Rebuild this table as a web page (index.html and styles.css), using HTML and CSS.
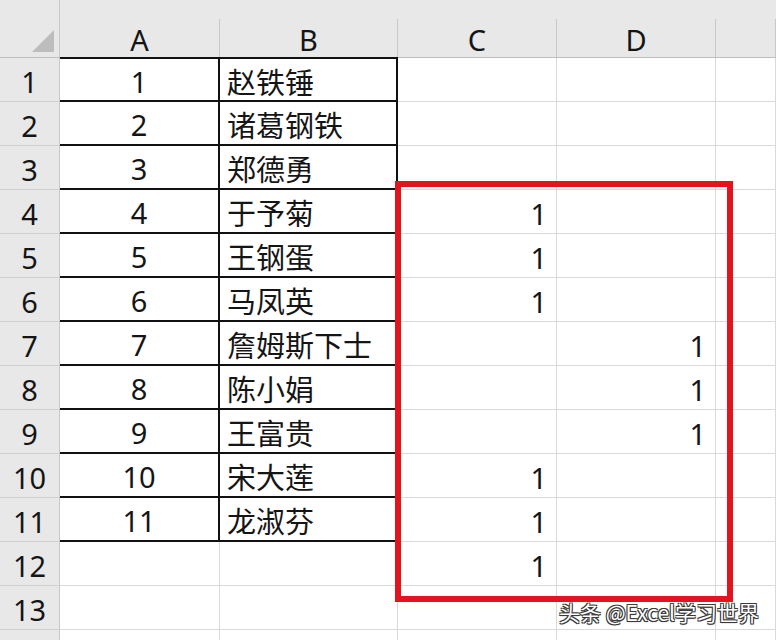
FILE: index.html
```html
<!DOCTYPE html>
<html lang="zh">
<head>
<meta charset="utf-8">
<link rel="stylesheet" href="styles.css">
</head>
<body>
<div class="sheet">
  <div class="grid">
    <div class="hd corner"><svg class="tri" width="22" height="22" viewBox="0 0 22 22"><polygon points="22,0 22,22 0,22" fill="#bdbdbd"/></svg></div>
    <div class="hd col"><span>A</span></div>
    <div class="hd col"><span>B</span></div>
    <div class="hd col"><span>C</span></div>
    <div class="hd col"><span>D</span></div>
    <div class="hd col"><span></span></div>

    <div class="rh">1</div><div class="c ctr bx top">1</div><div class="c txt bx top">赵铁锤</div><div class="c num"></div><div class="c num"></div><div class="c"></div>
    <div class="rh">2</div><div class="c ctr bx">2</div><div class="c txt bx">诸葛钢铁</div><div class="c num"></div><div class="c num"></div><div class="c"></div>
    <div class="rh">3</div><div class="c ctr bx">3</div><div class="c txt bx">郑德勇</div><div class="c num"></div><div class="c num"></div><div class="c"></div>
    <div class="rh">4</div><div class="c ctr bx">4</div><div class="c txt bx">于予菊</div><div class="c num">1</div><div class="c num"></div><div class="c"></div>
    <div class="rh">5</div><div class="c ctr bx">5</div><div class="c txt bx">王钢蛋</div><div class="c num">1</div><div class="c num"></div><div class="c"></div>
    <div class="rh">6</div><div class="c ctr bx">6</div><div class="c txt bx">马凤英</div><div class="c num">1</div><div class="c num"></div><div class="c"></div>
    <div class="rh">7</div><div class="c ctr bx">7</div><div class="c txt bx">詹姆斯下士</div><div class="c num"></div><div class="c num">1</div><div class="c"></div>
    <div class="rh">8</div><div class="c ctr bx">8</div><div class="c txt bx">陈小娟</div><div class="c num"></div><div class="c num">1</div><div class="c"></div>
    <div class="rh">9</div><div class="c ctr bx">9</div><div class="c txt bx">王富贵</div><div class="c num"></div><div class="c num">1</div><div class="c"></div>
    <div class="rh">10</div><div class="c ctr bx">10</div><div class="c txt bx">宋大莲</div><div class="c num">1</div><div class="c num"></div><div class="c"></div>
    <div class="rh">11</div><div class="c ctr bx">11</div><div class="c txt bx">龙淑芬</div><div class="c num">1</div><div class="c num"></div><div class="c"></div>
    <div class="rh">12</div><div class="c ctr"></div><div class="c txt"></div><div class="c num">1</div><div class="c num"></div><div class="c"></div>
    <div class="rh">13</div><div class="c"></div><div class="c"></div><div class="c"></div><div class="c"></div><div class="c"></div>
    <div class="rh"></div><div class="c"></div><div class="c"></div><div class="c"></div><div class="c"></div><div class="c"></div>
  </div>
  <div class="redbox"></div>
  <div class="mark">头条 @Excel学习世界</div>
</div>
</body>
</html>
```

FILE: styles.css
```css
html, body {
  margin: 0;
  padding: 0;
  background: #ffffff;
}

.sheet {
  position: relative;
  width: 776px;
  height: 640px;
  overflow: hidden;
  background: #ffffff;
  font-family: "Noto Sans", "Noto Sans CJK SC", sans-serif;
  color: #151515;
}

.grid {
  display: grid;
  grid-template-columns: 60px 160px 178px 159px 159px 60px;
  grid-template-rows: 58px repeat(14, 44px);
}

.hd {
  background: #e8e8e8;
  border-bottom: 1px solid #bdbdbd;
  box-sizing: border-box;
}

.corner {
  position: relative;
  border-right: 1px solid #c8c8c8;
}

.tri {
  position: absolute;
  left: 32px;
  top: 30px;
}

.col {
  display: flex;
  align-items: flex-end;
}

.col span {
  display: flex;
  align-items: center;
  justify-content: center;
  width: 100%;
  height: 38px;
  box-sizing: border-box;
  border-right: 1px solid #c8c8c8;
  font-size: 29px;
  line-height: 1;
  padding-top: 2px;
}

.rh {
  background: #e8e8e8;
  border-right: 1px solid #c8c8c8;
  border-bottom: 1px solid #d0d0d0;
  box-sizing: border-box;
  display: flex;
  align-items: center;
  justify-content: center;
  font-size: 29px;
  line-height: 1;
  padding-top: 3px;
}

.c {
  border-right: 1px solid #d9d9d9;
  border-bottom: 1px solid #d9d9d9;
  box-sizing: border-box;
  display: flex;
  align-items: center;
  font-size: 29px;
  line-height: 1;
  padding-top: 3px;
  white-space: nowrap;
}

.ctr {
  justify-content: center;
}

.txt {
  padding-left: 7px;
  font-family: "Noto Sans CJK SC", sans-serif;
  font-size: 29px;
}

.num {
  justify-content: flex-end;
  padding-right: 9px;
}

.bx {
  border-right: 2px solid #111111;
  border-bottom: 2px solid #111111;
}

.top {
  border-top: 2px solid #111111;
  margin-top: -1px;
}

.redbox {
  position: absolute;
  left: 395px;
  top: 181px;
  width: 338px;
  height: 421px;
  box-sizing: border-box;
  border: 6px solid #e2141e;
}

.mark {
  position: absolute;
  left: 559px;
  top: 599px;
  font-family: "Noto Sans CJK SC", sans-serif;
  font-size: 21px;
  line-height: 1.3;
  color: #ffffff;
  text-shadow: 1px 1px 0 #3a3a3a, -1px -1px 0 #3a3a3a, 1px -1px 0 #3a3a3a, -1px 1px 0 #3a3a3a, 0 1px 1px #3a3a3a;
}
```
